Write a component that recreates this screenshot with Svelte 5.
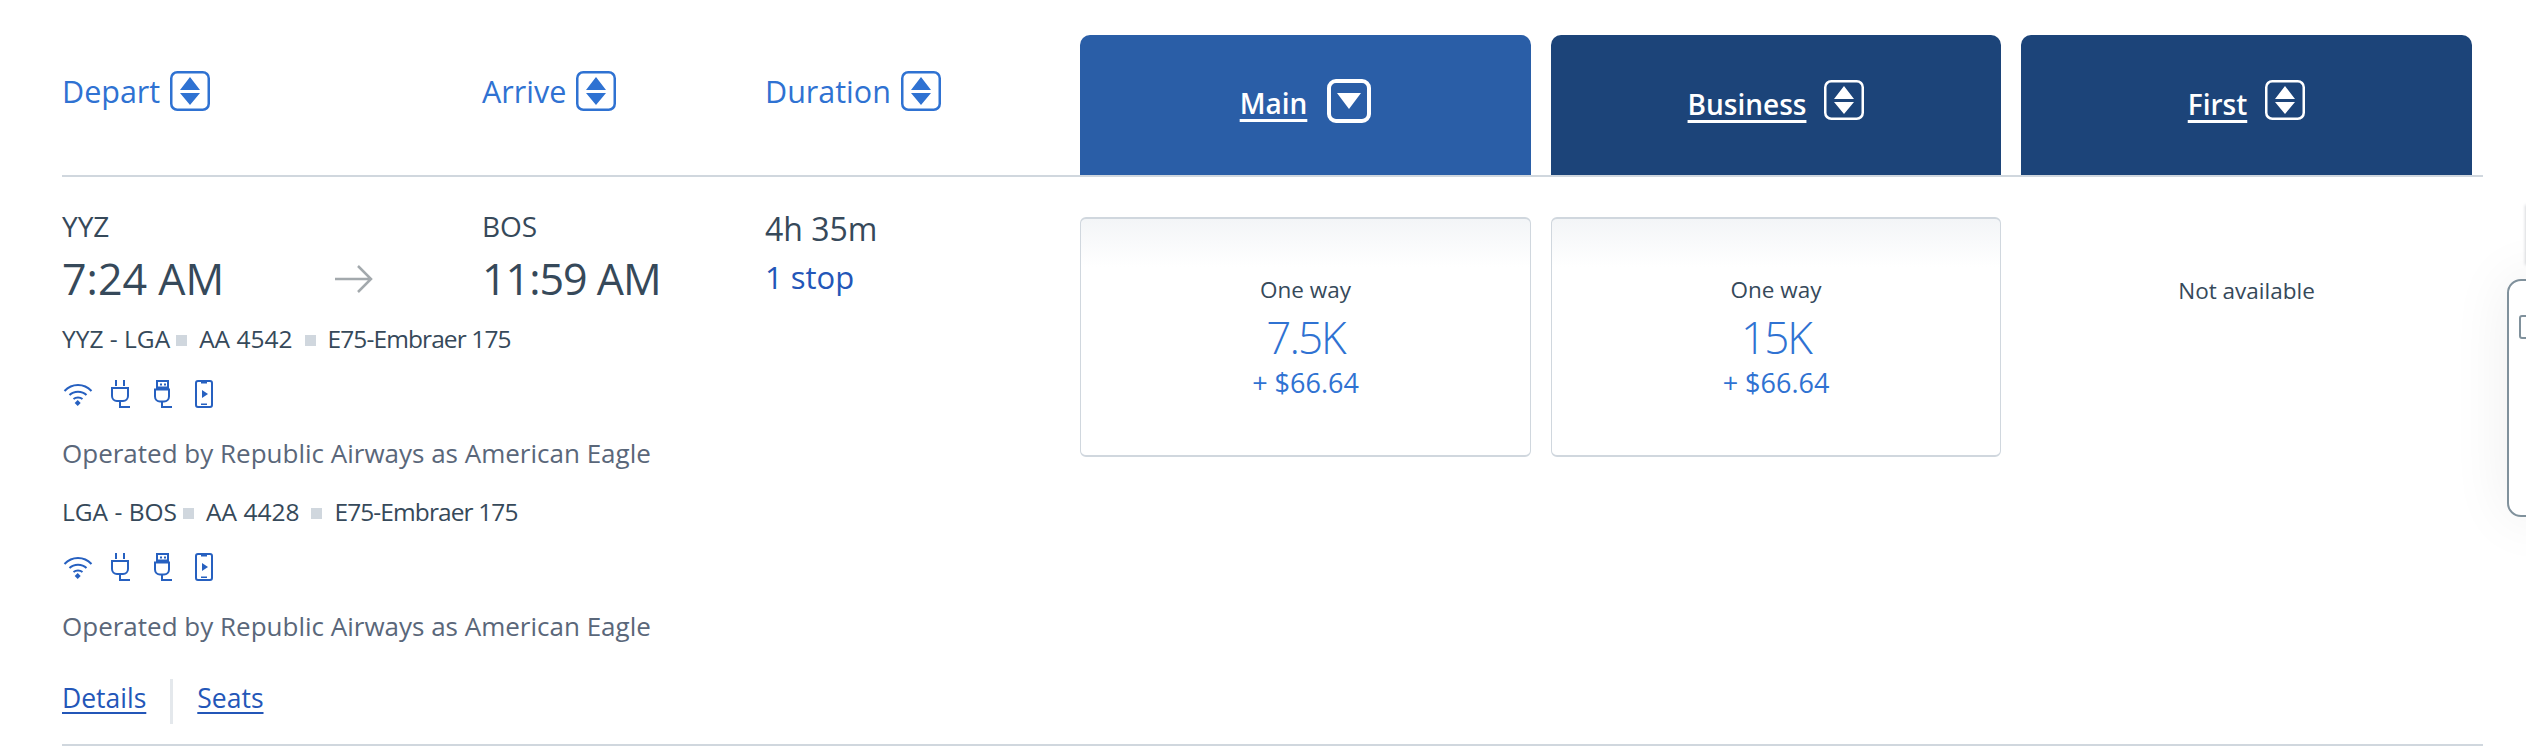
<script lang="ts">
  type Segment = { route: string; flight: string; aircraft: string };
  type Cabin = { name: string; active: boolean; miles: string | null };

  const segments: Segment[] = [
    { route: 'YYZ - LGA', flight: 'AA 4542', aircraft: 'E75-Embraer 175' },
    { route: 'LGA - BOS', flight: 'AA 4428', aircraft: 'E75-Embraer 175' },
  ];

  const cabins: Cabin[] = [
    { name: 'Main', active: true, miles: '7.5K' },
    { name: 'Business', active: false, miles: '15K' },
    { name: 'First', active: false, miles: null },
  ];
</script>

{#snippet sortIcon(size: string)}
  <svg class="sort {size}" viewBox="0 0 40 40" aria-hidden="true">
    <rect x="1.25" y="1.25" width="37.5" height="37.5" rx="6" fill="none" stroke="currentColor" stroke-width="2.5" />
    <path d="M20 6l10 13H10z M10 22h20L20 34z" fill="currentColor" />
  </svg>
{/snippet}

{#snippet amenities()}
  <div class="amenities">
    <svg viewBox="0 0 42 28" aria-hidden="true">
      <path d="M2.5 11C10 3 22 3 29.5 11M7.5 15C12 10.5 20 10.5 24.5 15M11.5 19C14 17 18 17 20.500 19" fill="none" stroke="currentColor" stroke-width="2" />
      <path d="M15.700 20l3 3-3 3-3-3z" fill="currentColor" />
    </svg>
    <svg viewBox="0 0 42 28" aria-hidden="true">
      <path d="M12 0v6M20 0v6M8 8h16v8a5 5 0 0 1-5 5h-6a5 5 0 0 1-5-5zM16 21v6h10" fill="none" stroke="currentColor" stroke-width="2" />
    </svg>
    <svg viewBox="0 0 42 28" aria-hidden="true">
      <path d="M11 1h11v6.500H11zM9 9.500h14v7a5 5 0 0 1-5 5h-4a5 5 0 0 1-5-5zM16 21.500V27h10" fill="none" stroke="currentColor" stroke-width="2" />
      <path d="M14 3.500h2v2h-2zM18 3.500h2v2h-2z" fill="currentColor" />
    </svg>
    <svg viewBox="0 0 42 28" aria-hidden="true">
      <rect x="8" y="1" width="16" height="26" rx="2" fill="none" stroke="currentColor" stroke-width="2" />
      <path d="M13 2h6v1.500h-6zM14 10l6 4-6 4zM13 23.500h6v1.500h-6z" fill="currentColor" />
    </svg>
  </div>
{/snippet}

<div class="page">
  <div class="table">
    <div class="head">
      <div class="sort-cols">
        <button class="sort-btn depart">Depart {@render sortIcon('sm')}</button>
        <button class="sort-btn arrive">Arrive {@render sortIcon('sm')}</button>
        <button class="sort-btn">Duration {@render sortIcon('sm')}</button>
      </div>
      {#each cabins as c}
        <div class="cabin" class:active={c.active}>
          <span class="cabin-name">{c.name}</span>
          {#if c.active}
            <svg class="sort lg" viewBox="0 0 44 44" aria-hidden="true">
              <rect x="2" y="2" width="40" height="40" rx="7" fill="none" stroke="currentColor" stroke-width="4" />
              <path d="M10 14h24L22 30z" fill="currentColor" />
            </svg>
          {:else}
            {@render sortIcon('sm')}
          {/if}
        </div>
      {/each}
    </div>

    <div class="row">
      <div class="flight">
        <div class="times">
          <div class="place depart">
            <div class="code">YYZ</div>
            <div class="time">7:24 AM</div>
          </div>
          <svg class="arrow" viewBox="0 0 38 30" aria-hidden="true">
            <path d="M0 15h36M23 2l13 13-13 13" fill="none" stroke="#a3a9ad" stroke-width="2.500" />
          </svg>
          <div class="place arrive">
            <div class="code">BOS</div>
            <div class="time">11:59 AM</div>
          </div>
          <div class="place">
            <div class="dur">4h 35m</div>
            <div class="stops">1 stop</div>
          </div>
        </div>

        {#each segments as s}
          <div class="seg-line">
            <span>{s.route}</span><i class="dot"></i><span>{s.flight}</span><i class="dot second"></i><span class="aircraft">{s.aircraft}</span>
          </div>
          {@render amenities()}
          <div class="operated">Operated by Republic Airways as American Eagle</div>
        {/each}

        <div class="links">
          <a href="#details">Details</a>
          <a href="#seats">Seats</a>
        </div>
      </div>

      {#each cabins as c}
        <div class="fare" class:empty={!c.miles}>
          {#if c.miles}
            <div class="fare-label">One way</div>
            <div class="miles">{c.miles}</div>
            <div class="tax">+ $66.64</div>
          {:else}
            <div class="fare-label">Not available</div>
          {/if}
        </div>
      {/each}
    </div>
  </div>

  <div class="peek-top"></div>
  <div class="peek"><span class="peek-icon"></span></div>
</div>

<style>
  :global(body) {
    margin: 0;
    background: #fff;
  }
  .page {
    position: relative;
    width: 2526px;
    height: 746px;
    overflow: hidden;
    font-family: 'Open Sans', 'Noto Sans', sans-serif;
    color: #36495a;
  }
  .table {
    margin-left: 62px;
    width: 2421px;
  }
  .head {
    display: grid;
    grid-template-columns: 998px 451px 450px 451px;
    column-gap: 20px;
    padding-top: 35px;
    height: 140px;
    border-bottom: 2px solid #d0d7de;
  }
  .sort-cols {
    display: flex;
    align-items: flex-start;
    padding-top: 36px;
  }
  .sort-btn {
    display: inline-flex;
    align-items: center;
    gap: 10px;
    border: 0;
    padding: 0;
    background: none;
    font: inherit;
    font-size: 30.500px;
    color: #2f72d2;
    height: 40px;
  }
  .sort-btn.depart {
    width: 420px;
  }
  .sort-btn.arrive {
    width: 283px;
  }
  .sort {
    flex: none;
    display: block;
  }
  .sort.sm {
    width: 40px;
    height: 40px;
  }
  .sort.lg {
    width: 44px;
    height: 44px;
  }
  .cabin {
    display: flex;
    justify-content: center;
    align-items: flex-start;
    gap: 18px;
    padding-top: 45px;
    background: #1c4479;
    color: #fff;
    border-radius: 10px 10px 0 0;
  }
  .cabin.active {
    background: #2a5ea7;
    gap: 20px;
    padding-top: 44px;
  }
  .cabin-name {
    font-size: 28px;
    font-weight: 600;
    text-decoration: underline;
    text-decoration-thickness: 3px;
    text-underline-offset: 5px;
    line-height: 48px;
  }
  .row {
    display: grid;
    grid-template-columns: 998px 451px 450px 451px;
    column-gap: 20px;
    height: 569px;
    box-sizing: border-box;
    border-bottom: 2px solid #d0d7de;
  }
  .flight {
    padding-top: 30px;
  }
  .times {
    display: flex;
    align-items: flex-start;
  }
  .place.depart {
    width: 273px;
  }
  .place.arrive {
    width: 283px;
  }
  .arrow {
    flex: none;
    width: 38px;
    height: 30px;
    margin: 57px 109px 0 0;
  }
  .code {
    font-size: 28px;
    line-height: 38px;
  }
  .time {
    font-size: 43px;
    line-height: 58px;
    margin-top: 5px;
    white-space: nowrap;
  }
  .arrive .time {
    letter-spacing: -1px;
  }
  .dur {
    font-size: 32px;
    line-height: 38px;
    margin-top: 3px;
  }
  .stops {
    font-size: 31px;
    line-height: 44px;
    color: #2356b8;
    margin-top: 7px;
  }
  .seg-line {
    display: flex;
    align-items: center;
    font-size: 24.500px;
    line-height: 32px;
    margin-top: 15px;
  }
  .amenities + .operated + .seg-line {
    margin-top: 26px;
  }
  .aircraft {
    letter-spacing: -0.9px;
  }
  .dot {
    width: 11px;
    height: 11px;
    margin: 3px 12px 0 6px;
    background: #d0d7de;
  }
  .dot.second {
    margin-left: 12px;
  }
  .amenities {
    display: flex;
    margin-top: 25px;
    color: #2660c0;
  }
  .amenities svg {
    width: 42px;
    height: 28px;
  }
  .operated {
    margin-top: 28px;
    font-size: 26px;
    line-height: 34px;
    color: #5a677a;
  }
  .links {
    display: flex;
    align-items: flex-start;
    margin-top: 36px;
  }
  .links a {
    font-size: 26.500px;
    line-height: 38px;
    color: #2356b8;
    text-decoration-thickness: 2px;
    text-underline-offset: 4px;
  }
  .links a + a {
    margin-left: 24px;
    padding: 0 0 7px 24px;
    border-left: 3px solid #e4e8ec;
  }
  .fare {
    box-sizing: border-box;
    height: 240px;
    margin-top: 40px;
    padding-top: 56px;
    text-align: center;
    border: 1px solid #d0d7de;
    border-top-width: 2px;
    border-bottom-width: 2px;
    border-radius: 6px;
    background: linear-gradient(#f3f5f7, #fff 48px);
  }
  .fare.empty {
    border: 0;
    background: none;
    padding-top: 59px;
  }
  .fare-label {
    font-size: 22.500px;
    line-height: 30px;
  }
  .miles {
    font-size: 44px;
    font-weight: 300;
    letter-spacing: -2px;
    line-height: 56px;
    color: #2f72d2;
    margin-top: 4px;
  }
  .tax {
    font-size: 27px;
    line-height: 34px;
    color: #2f72d2;
    margin-top: 1px;
  }
  /* edge of a floating panel cut by the window */
  .peek {
    position: absolute;
    left: 2507px;
    top: 279px;
    width: 60px;
    height: 238px;
    box-sizing: border-box;
    border: 2px solid #80919c;
    border-radius: 14px;
    background: #fff;
    box-shadow: 0 0 60px rgba(0, 0, 0, 0.07);
    filter: blur(0.5px);
  }
  .peek-icon {
    position: absolute;
    left: 10px;
    top: 34px;
    width: 20px;
    height: 20px;
    border: 2px solid #80919c;
    border-radius: 3px;
  }
  .peek-top {
    position: absolute;
    left: 2525px;
    top: 205px;
    width: 20px;
    height: 60px;
    background: #d8dadc;
    filter: blur(1.5px);
  }
</style>
